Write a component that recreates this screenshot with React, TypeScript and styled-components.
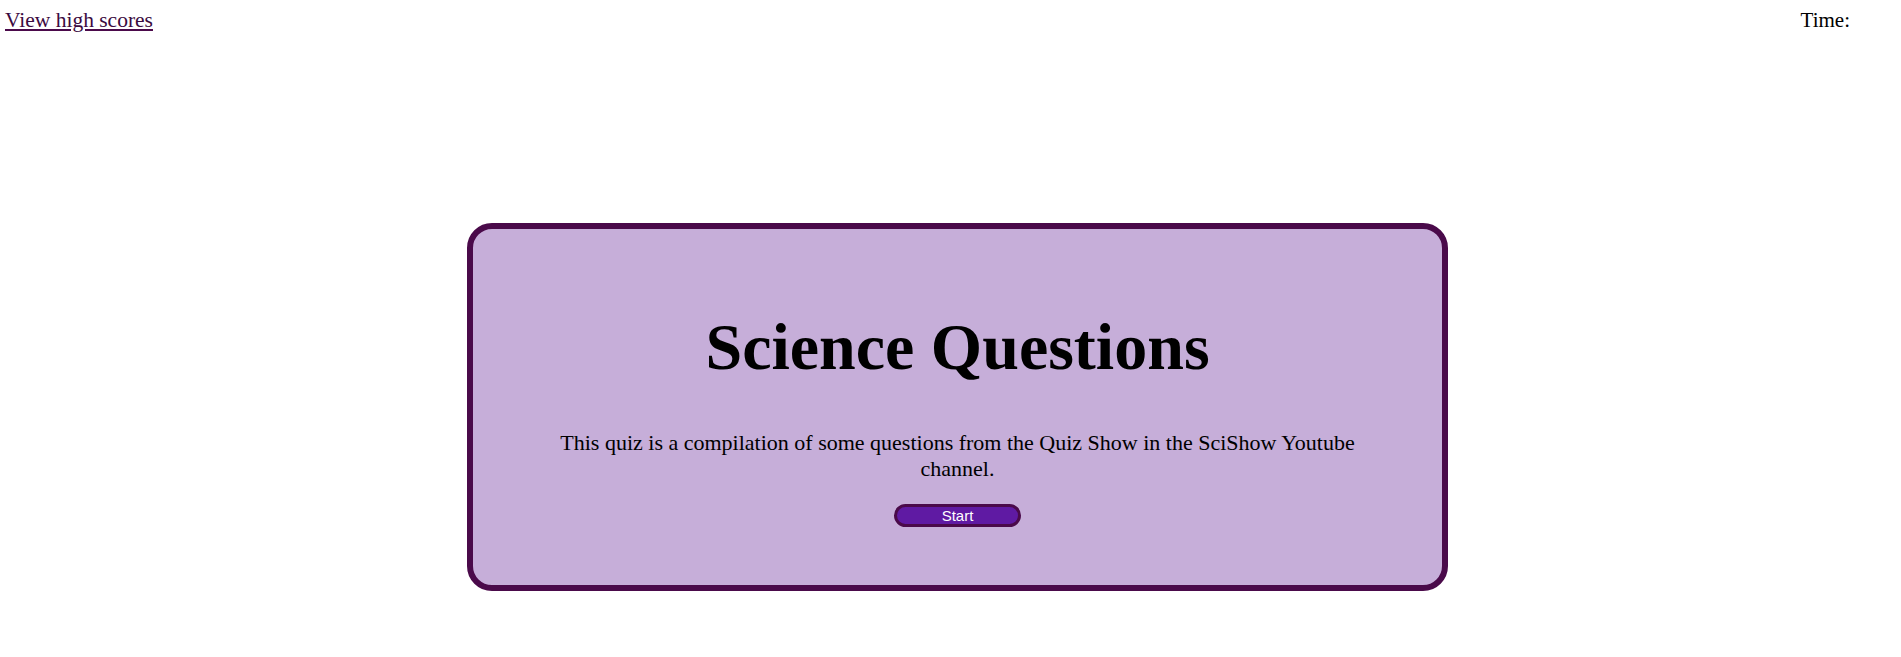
import React from "react";
import styled, { createGlobalStyle } from "styled-components";

const GlobalStyle = createGlobalStyle`
  html, body {
    margin: 0;
    padding: 0;
    background: #ffffff;
    font-family: "Liberation Serif", "Times New Roman", serif;
    color: #000000;
  }
`;

const Header = styled.header`
  display: flex;
  justify-content: space-between;
  align-items: flex-start;
  padding: 8px 51px 0 5px;
  font-size: 21.5px;
  line-height: 24px;
`;

const ScoresLink = styled.a`
  color: #3b0a40;
  text-decoration: underline;
  text-decoration-color: #4b0a4b;
  cursor: pointer;
`;

const Timer = styled.div`
  color: #000000;
  font-size: 21px;
`;

const Main = styled.main`
  display: flex;
  justify-content: center;
  padding-left: 14px;
  margin-top: 191px;
`;

const Card = styled.section`
  box-sizing: border-box;
  width: 981px;
  height: 368px;
  border: 6px solid #4a0a4a;
  border-radius: 25px;
  background: #c6aed9;
  display: flex;
  flex-direction: column;
  align-items: center;
  padding-top: 81px;
`;

const Title = styled.h1`
  margin: 0;
  font-size: 66px;
  line-height: 74px;
  font-weight: bold;
  text-align: center;
`;

const Intro = styled.p`
  margin: 46px 0 0;
  max-width: 820px;
  font-size: 22px;
  line-height: 26px;
  text-align: center;
`;

const StartButton = styled.button`
  box-sizing: border-box;
  margin-top: 22px;
  width: 127px;
  height: 23px;
  padding: 0;
  border: 3px solid #4a0a4a;
  border-radius: 12px;
  background: #5f1aa3;
  color: #ffffff;
  font-family: "Liberation Sans", Arial, sans-serif;
  font-size: 15px;
  line-height: 17px;
  cursor: pointer;
`;

export default function App() {
  return (
    <>
      <GlobalStyle />
      <Header>
        <ScoresLink href="#">View high scores</ScoresLink>
        <Timer>Time: </Timer>
      </Header>
      <Main>
        <Card>
          <Title>Science Questions</Title>
          <Intro>
            This quiz is a compilation of some questions from the Quiz Show in
            the SciShow Youtube channel.
          </Intro>
          <StartButton>Start</StartButton>
        </Card>
      </Main>
    </>
  );
}
